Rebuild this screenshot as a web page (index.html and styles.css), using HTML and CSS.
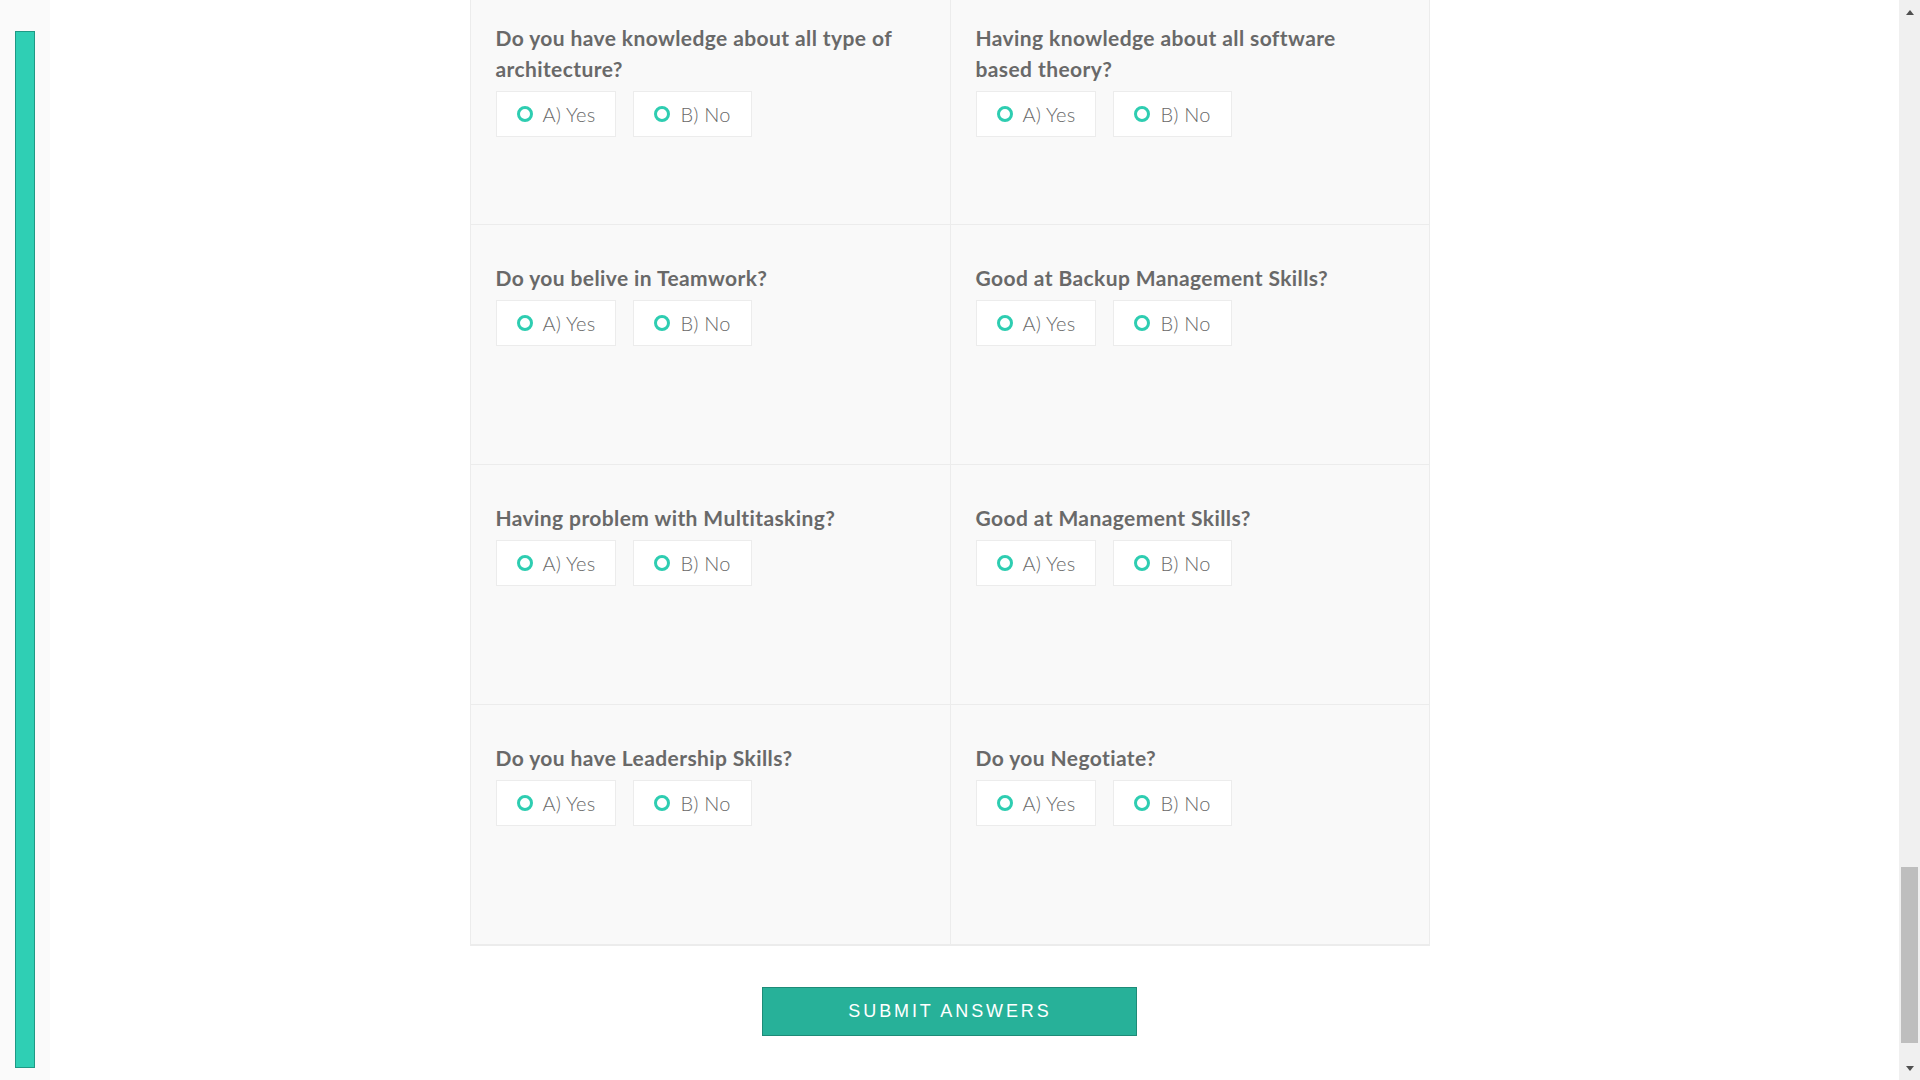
FILE: index.html
```html
<!DOCTYPE html>
<html lang="en">
<head>
<meta charset="utf-8">
<title>Quiz</title>
<link rel="stylesheet" href="styles.css">
</head>
<body>
<div class="page">
  <aside class="sidebar"><div class="progress"></div></aside>
  <main class="main">
    <form class="quiz">
      <div class="grid">
        <div class="cell">
          <h3 class="question">Do you have knowledge about all type of architecture?</h3>
          <div class="options">
            <label class="option"><span class="radio"></span>A) Yes</label>
            <label class="option"><span class="radio"></span>B) No</label>
          </div>
        </div>
        <div class="cell">
          <h3 class="question">Having knowledge about all software based theory?</h3>
          <div class="options">
            <label class="option"><span class="radio"></span>A) Yes</label>
            <label class="option"><span class="radio"></span>B) No</label>
          </div>
        </div>
        <div class="cell">
          <h3 class="question">Do you belive in Teamwork?</h3>
          <div class="options">
            <label class="option"><span class="radio"></span>A) Yes</label>
            <label class="option"><span class="radio"></span>B) No</label>
          </div>
        </div>
        <div class="cell">
          <h3 class="question">Good at Backup Management Skills?</h3>
          <div class="options">
            <label class="option"><span class="radio"></span>A) Yes</label>
            <label class="option"><span class="radio"></span>B) No</label>
          </div>
        </div>
        <div class="cell">
          <h3 class="question">Having problem with Multitasking?</h3>
          <div class="options">
            <label class="option"><span class="radio"></span>A) Yes</label>
            <label class="option"><span class="radio"></span>B) No</label>
          </div>
        </div>
        <div class="cell">
          <h3 class="question">Good at Management Skills?</h3>
          <div class="options">
            <label class="option"><span class="radio"></span>A) Yes</label>
            <label class="option"><span class="radio"></span>B) No</label>
          </div>
        </div>
        <div class="cell">
          <h3 class="question">Do you have Leadership Skills?</h3>
          <div class="options">
            <label class="option"><span class="radio"></span>A) Yes</label>
            <label class="option"><span class="radio"></span>B) No</label>
          </div>
        </div>
        <div class="cell">
          <h3 class="question">Do you Negotiate?</h3>
          <div class="options">
            <label class="option"><span class="radio"></span>A) Yes</label>
            <label class="option"><span class="radio"></span>B) No</label>
          </div>
        </div>
      </div>
      <div class="actions">
        <button type="button" class="submit">SUBMIT ANSWERS</button>
      </div>
    </form>
  </main>
  <div class="scrollbar">
    <div class="sb-btn"><span class="arrow-up"></span></div>
    <div class="sb-thumb"></div>
    <div class="sb-btn"><span class="arrow-down"></span></div>
  </div>
</div>
</body>
</html>
```
FILE: styles.css
```css
* { box-sizing: border-box; }
html, body { margin: 0; padding: 0; background: #ffffff; }
body { font-family: "Lato", "Open Sans", sans-serif; color: #666666; }

.page {
  position: relative;
  display: flex;
  width: 1920px;
  height: 1080px;
  overflow: hidden;
}

.sidebar {
  position: absolute;
  left: 0;
  top: 0;
  width: 50px;
  height: 1080px;
  background: #fafafa;
  padding: 31px 0 0 15px;
  z-index: 2;
}
.progress {
  width: 20px;
  height: 1037px;
  background: #2fcfb4;
  border: 1px solid #1f9985;
}

.main {
  flex: 1;
  height: 1080px;
  display: flex;
  flex-direction: column;
  justify-content: flex-end;
  align-items: center;
  overflow: hidden;
}

.quiz { width: 960px; display: flex; flex-direction: column; align-items: center; }

.grid {
  width: 960px;
  display: grid;
  grid-template-columns: 480px 478px;
  border: 1px solid #ececec;
  background: #f9f9f9;
}

.cell {
  height: 240px;
  padding: 37px 30px 0 25px;
  border-bottom: 1px solid #ececec;
}
.cell:nth-child(odd) { border-right: 1px solid #ececec; }

.question {
  margin: 0 0 7px 0;
  font-size: 21px;
  line-height: 31px;
  font-weight: 700;
  letter-spacing: 0.4px;
  color: #696969;
  max-width: 408px;
}

.options { display: flex; gap: 17px; }

.option {
  display: inline-flex;
  align-items: center;
  gap: 10px;
  height: 46px;
  padding: 0 20px 0 20px;
  background: #ffffff;
  border: 1px solid #ececec;
  font-size: 20px;
  font-weight: 300;
  letter-spacing: 0.2px;
  color: #696969;
}

.radio {
  width: 16px;
  height: 16px;
  border: 3px solid #2ecdb1;
  border-radius: 50%;
  flex: none;
}

.actions { margin: 41px 0 44px; }

.submit {
  width: 375px;
  height: 49px;
  background: #27b199;
  border: 1px solid #1e8b78;
  color: #ffffff;
  font-family: "Liberation Sans", Arial, sans-serif;
  font-size: 18px;
  letter-spacing: 2.9px;
  padding: 0 0 0 1px;
  cursor: pointer;
}

.scrollbar {
  width: 21px;
  height: 1080px;
  background: #f0f0f0;
  display: flex;
  flex-direction: column;
  align-items: center;
  flex: none;
}
.sb-btn {
  width: 21px;
  height: 24px;
  display: flex;
  align-items: center;
  justify-content: center;
}
.arrow-up {
  width: 0; height: 0;
  border-left: 4.5px solid transparent;
  border-right: 4.5px solid transparent;
  border-bottom: 5px solid #505050;
}
.arrow-down {
  width: 0; height: 0;
  border-left: 4.5px solid transparent;
  border-right: 4.5px solid transparent;
  border-top: 5px solid #505050;
}
.sb-thumb {
  width: 17px;
  height: 176px;
  margin-top: auto;
  margin-bottom: 13px;
  background: #bebebe;
}
```
